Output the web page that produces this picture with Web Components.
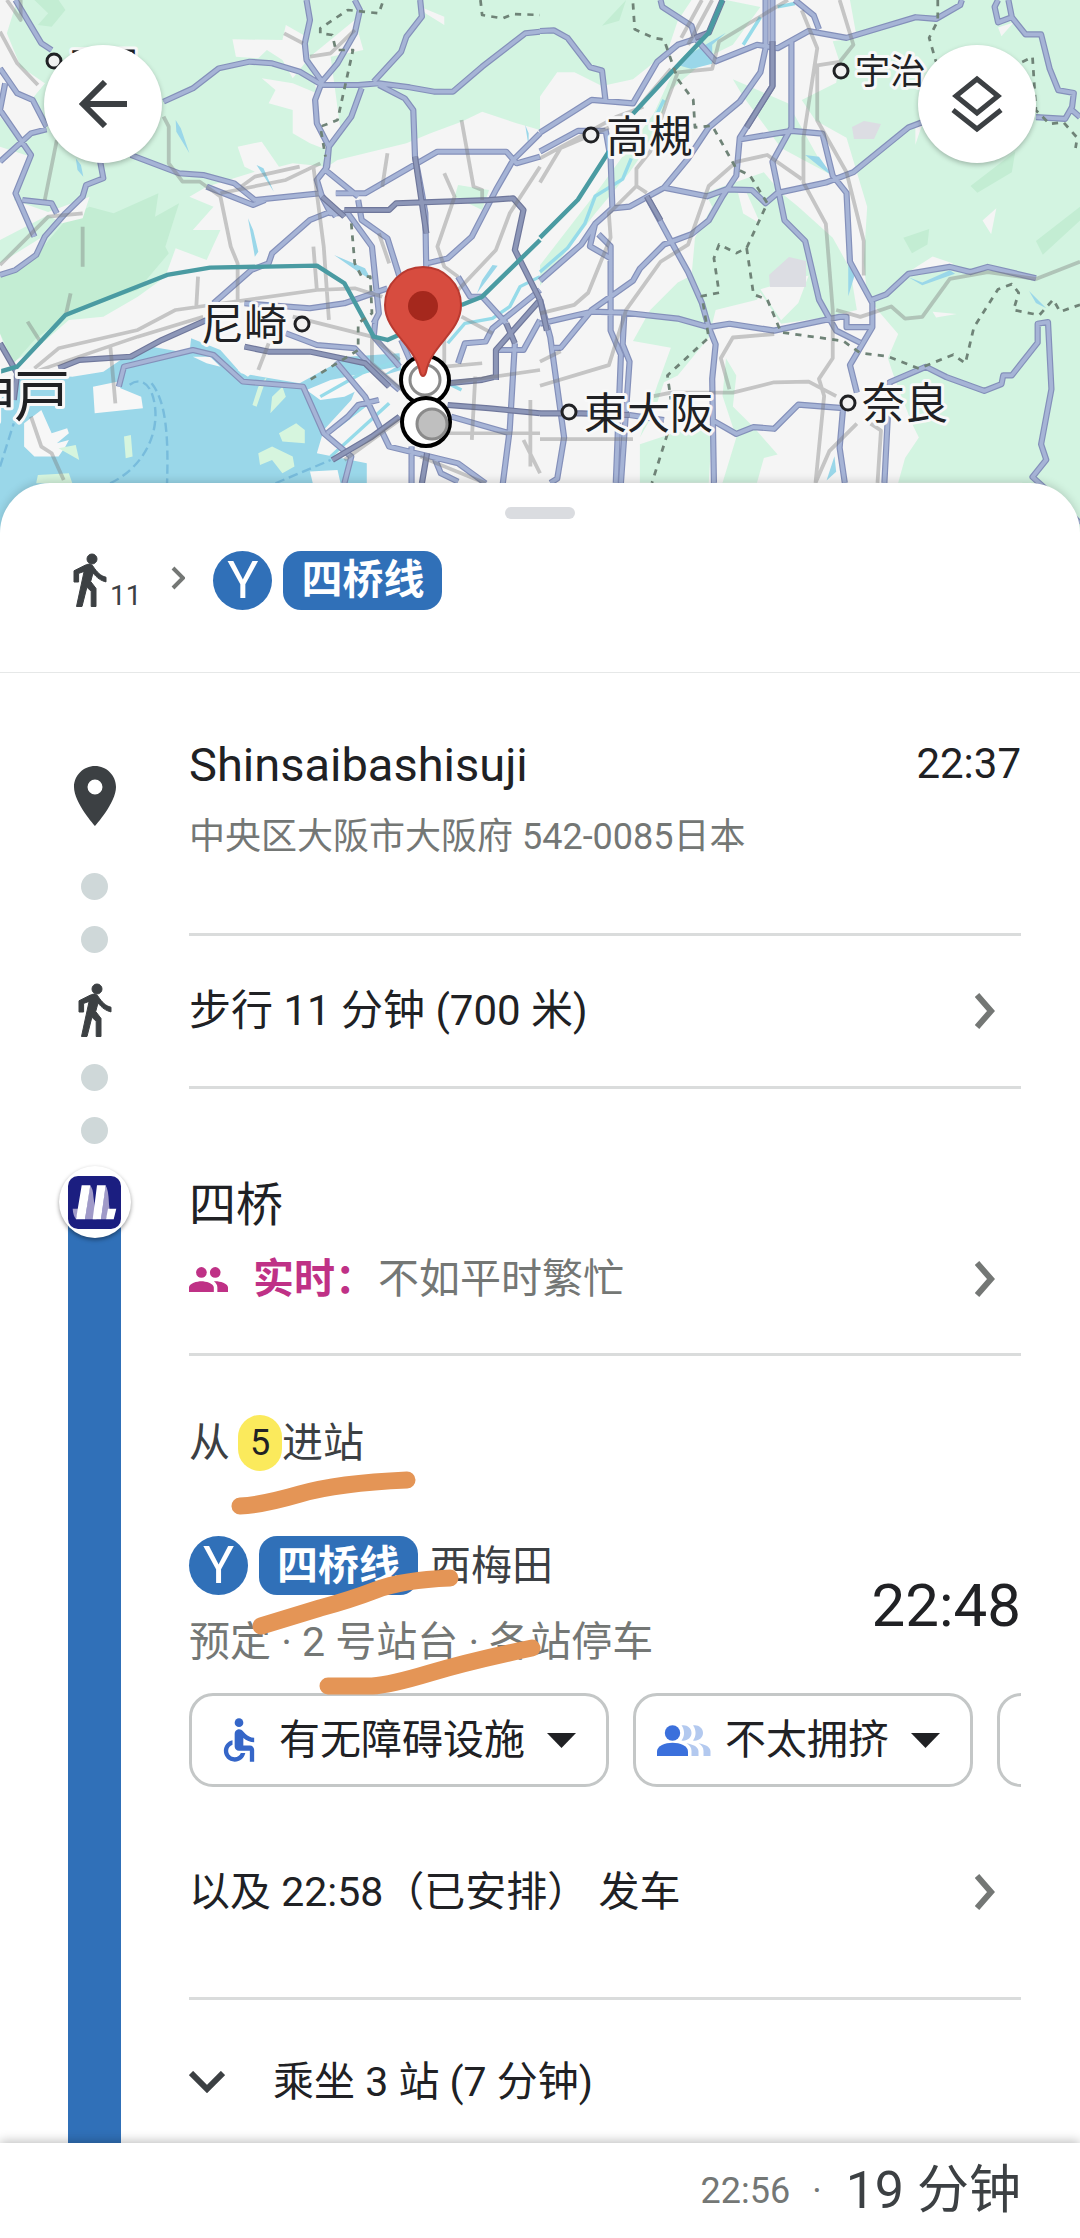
<!DOCTYPE html>
<html lang="zh-CN">
<head>
<meta charset="utf-8">
<meta name="viewport" content="width=device-width, initial-scale=1">
<title>路线详情</title>
<style>
  body {
    margin: 0;
    background: #fff;
    color: #202124;
    font-family: Roboto, "Noto Sans CJK SC", sans-serif;
    font-size: 41px;
    line-height: 54px;
    --line: #3070b8;
    --muted: #747775;
    --rule: #dadcdc;
    --gutter: 59px;
  }
</style>
</head>
<body>
<transit-page>
  <route-map slot="map"></route-map>
  <route-summary slot="summary" minutes="11">
    <line-badge code="Y">四桥线</line-badge>
  </route-summary>

  <route-leg mode="walk">
    <route-step>
      <place-row time="22:37">
        Shinsaibashisuji
        <span slot="address">中央区大阪市大阪府 542-0085日本</span>
      </place-row>
    </route-step>
    <route-step>
      <link-row tall>步行 11 分钟 (700 米)</link-row>
    </route-step>
  </route-leg>

  <route-leg mode="train">
    <route-step>
      <station-info name="四桥">
        <link-row><live-crowd label="实时：">不如平时繁忙</live-crowd></link-row>
      </station-info>
    </route-step>
    <route-step>
      <board-info exit="5" time="22:48">
        <line-badge slot="line" code="Y">四桥线</line-badge>
        <span slot="headsign">西梅田</span>
        <span slot="detail">预定 · 2 号站台 · 各站停车</span>
        <option-chip slot="chips" icon="accessible">有无障碍设施</option-chip>
        <option-chip slot="chips" icon="crowd">不太拥挤</option-chip>
        <option-chip slot="chips" label="更多"></option-chip>
        <link-row slot="next">以及 22:58（已安排） 发车</link-row>
      </board-info>
    </route-step>
    <route-step last>
      <stop-toggle>乘坐 3 站 (7 分钟)</stop-toggle>
    </route-step>
  </route-leg>

  <trip-total slot="footer" arrive="22:56">19 分钟</trip-total>
</transit-page>

<script>
const define = (name, render) => customElements.define(name, class extends HTMLElement {
  constructor() { super(); this.attachShadow({ mode: "open" }); }
  connectedCallback() { this.shadowRoot.innerHTML = render(this); }
});
const attr = (el, name) => el.getAttribute(name) || "";

const reset = `
  *, :host { box-sizing: border-box; }
  button { font: inherit; color: inherit; background: none; border: 0; margin: 0; padding: 0; text-align: left; cursor: pointer; }
  svg { display: block; flex: none; }
`;

const icons = {
  walk: `<svg width="40" height="56" viewBox="0 0 40 56" fill="#3c4043" stroke="#3c4043"><circle cx="22" cy="7" r="5"/><path d="M15 13.300L4 18.800V30h4.600v-8.600l5.500-2L6.500 54.500H12l4.900-19.300 4.300 4.100v15.200h4.800V36.400L20.700 29.500 23 21C27 26 31 28.700 36 29.900V25.200C30.500 24 27 20 23.500 15 21.500 11.500 19 11.500 15 13.300Z"/></svg>`,
  place: `<svg width="72" height="72" viewBox="0 0 24 24" fill="#3c4043"><path d="M12 2C8.130 2 5 5.130 5 9c0 5.250 7 13 7 13s7-7.750 7-13c0-3.870-3.130-7-7-7zm0 9.500a2.500 2.500 0 1 1 0-5 2.500 2.500 0 0 1 0 5z"/></svg>`,
  next: `<svg width="20" height="36" viewBox="0 0 20 36" fill="none" stroke="#747775" stroke-width="6"><path d="M2 2l14 16L2 34"/></svg>`,
  nextSmall: `<svg width="14" height="24" viewBox="0 0 14 24" fill="none" stroke="#747775" stroke-width="4"><path d="M2 2l10 10L2 22"/></svg>`,
  down: `<svg width="36" height="22" viewBox="0 0 36 22" fill="none" stroke="#3c4043" stroke-width="6"><path d="M2 2l16 16L34 2"/></svg>`,
  caret: `<svg width="29" height="15" viewBox="0 0 29 15"><path d="M0 0h29L14.500 15z" fill="#202124"/></svg>`,
  people: `<svg width="39" height="25" viewBox="1 5 22 14" fill="#bf3186"><circle cx="8" cy="8" r="3"/><circle cx="15.800" cy="8" r="3"/><path d="M8 13c-2.330 0-7 1.170-7 3.500V19h14v-2.500c0-2.330-4.670-3.500-7-3.500zm8 0c-.29 0-.62.02-.97.05 1.160.84 1.970 1.970 1.970 3.450V19h6v-2.500c0-2.330-4.670-3.500-7-3.500z"/></svg>`,
  accessible: `<svg width="52" height="52" viewBox="0 0 24 24" fill="#3566c8"><circle cx="12" cy="4" r="2"/><path d="M19 13v-2c-1.540.02-3.090-.75-4.070-1.830l-1.290-1.430c-.17-.19-.38-.34-.61-.45H13c-.35-.2-.75-.3-1.190-.26C10.760 7.110 10 8.040 10 9.090V15c0 1.100.9 2 2 2h5v5h2v-5.500c0-1.100-.9-2-2-2h-3v-3.450c1.290 1.070 3.250 1.940 5 1.950zm-6.170 5c-.41 1.160-1.520 2-2.830 2-1.660 0-3-1.340-3-3 0-1.310.84-2.410 2-2.830V12.100c-2.280.46-4 2.480-4 4.900 0 2.760 2.240 5 5 5 2.420 0 4.440-1.720 4.900-4h-2.070z"/></svg>`,
  crowd: `<svg width="54" height="31" viewBox="0 0 54 31"><circle cx="15.500" cy="8" r="7.700" fill="#3b70dc"/><path d="M0 31v-4.500c0-6 8-8.800 15.500-8.800S31 20.500 31 26.500V31z" fill="#3b70dc"/><g fill="#b3c9ef"><path d="M24.500.6c5-1.200 10 2.400 10 7.400s-5 8.600-10 7.400c3.400-4 3.400-10.800 0-14.800z"/><path d="M36 .6c5-1.200 10 2.400 10 7.400s-5 8.600-10 7.400c3.400-4 3.400-10.800 0-14.800z"/><path d="M29.500 18.300C36.500 19.500 41.500 22 41.500 26.500V31H34.500v-5c0-3.500-2-6-5-7.700z"/><path d="M41.500 18.300C48.500 19.500 53.500 22 53.500 26.500V31H46.500v-5c0-3.500-2-6-5-7.700z"/></g></svg>`,
  back: `<svg width="48" height="48" viewBox="0 0 48 48" fill="none" stroke="#3c4043" stroke-width="6"><path d="M48 24H4M26 2L4 24l22 22"/></svg>`,
  layers: `<svg width="52" height="58" viewBox="0 0 52 58" fill="none" stroke="#3c4043" stroke-width="5"><path d="M26 4l21 17-21 17L5 21zM2 35l24 19 24-19"/></svg>`,
  metro: `<svg width="53" height="53" viewBox="0 0 53 53"><rect width="53" height="53" rx="10" fill="#1b1e80"/><path d="M4.700 32.700h6L8 43.300q-3-4-3.300-10.600zM22 9.300q3 3 3.500 12l3 22H17zM37.500 9.300q3 4 3.500 19l.5 4.500L38 43.300h-5z" fill="#a09ac8"/><path d="M13.700 9.300h8.600L17 43.300H8zM29 9.300h8.700L33 43.300h-8.300zM40 32.700h8.300l-2.600 10.600H38z" fill="#fff"/></svg>`
};

/* Map artwork. Two tiles side by side, each with its own drawing grid. */
const west = {
  park: "M50 0H1568V390L1500 370 1400 335 1340 365 1250 400 1180 430 980 480 950 500 850 490 810 500 760 425 690 440 710 500 740 515 600 560 550 590 620 620 560 690 640 690 600 780 510 745 480 830 400 890 300 950 200 960 100 1050 30 1090 0 1000V840L100 770 140 700 0 790V720L150 640 40 600 90 470 0 440V350L60 420 130 380 90 300 130 250 60 200 20 100ZM1330 555L1420 570 1400 630 1320 590Z",
  forest: "M0 830L100 770 200 650 260 620 330 640 460 580 450 650 520 610 480 740 490 760 400 870 200 940 100 1020 40 1090 0 1000ZM100 0H170L190 30 150 80 110 75 140 40Z",
  town: "M675 118L820 120 830 75 890 110 900 170 850 235 820 180 775 150 750 175 685 170ZM900 170L1030 60 1055 150 960 170 990 400 950 450 900 430 850 400 850 330 780 310 800 270 760 235 850 250 920 280ZM1220 20L1290 50V75L1235 40ZM0 250L60 420 130 380 90 300 130 250ZM130 640L260 590 240 655 180 670Z",
  water: "M0 1200L60 1120 210 1130 300 1115 350 1080 440 1040 550 1060 555 1015 640 1050 700 1120 870 1150 1010 1070 1160 1060 1165 1110 1040 1150 1020 1200 940 1290 920 1360 1065 1390V1660H0ZM510 360L525 385 550 460 512 395ZM745 495L765 505 795 575 770 535ZM720 655L735 690 750 755 740 770ZM220 475L235 495 242 530 225 510ZM970 765L1060 805 1078 840 1040 815ZM1525 375L1535 400V440ZM1430 795L1445 797 1385 880 1400 840Z",
  pier: "M270 1160L340 1145 350 1165 410 1190 415 1225 275 1240ZM70 1270L120 1230 150 1300 195 1285 200 1300 165 1330 200 1320 190 1340 170 1370 100 1370 70 1340ZM890 1170L960 1140 1150 1100 1060 1160 1000 1190 930 1200ZM900 1415L980 1410 1000 1500H920ZM690 1110H740L720 1130ZM560 1070L610 1070 640 1100 600 1090Z",
  isle: "M810 1300L860 1270 885 1290V1330L820 1325ZM360 1310L380 1305 385 1370 365 1375ZM750 1360L790 1340 850 1370 855 1400 820 1420 790 1380 755 1395ZM110 1425L200 1420 210 1450H105ZM170 1345L220 1335 230 1380ZM750 1160L775 1130 745 1220 733 1215ZM790 1190L820 1160 830 1190 785 1240Z",
  river: "M1300 1030L1350 970 1430 955 1480 920 1510 860 1568 830M930 1190L1050 1120 1160 1080M980 1280L1080 1200M960 1370L1130 1210M1300 1150L1340 1170",
  grey: "M0 95L50 190 110 255M165 420L130 600M0 795L140 650 240 640M240 680V800M205 880L190 950M80 965L120 1030M575 830L570 920M475 350L490 380V490L530 545H580L640 590 670 740 690 790V900M640 580L830 540 930 490M700 560L740 530 870 500M910 500L940 740 955 960M910 740L920 870M100 1105L170 1045 400 990 510 930 920 870 1030 865 1110 890M60 1130L400 1010 590 950M850 950L1080 1010 1160 1080M1125 460L1110 560M1100 700L1130 790M1340 360L1375 560 1400 570V600M1290 520L1320 590 1270 740 1290 800 1330 830M1568 500L1480 640 1440 750 1330 870M1300 1150L1568 1110M1300 1300H1568M1380 1130L1370 1320M1340 950L1430 1000M1290 980V1100L1400 1090M320 1035L335 1210M90 1250L120 1340 150 1360 185 1440M825 100L880 130M900 170L960 160 1030 90M780 1030L750 1110M1220 1370L1410 1450M1520 1320L1568 1420M1080 1010V1090L1200 1200M1000 1380L1160 1260M20 0L60 60 60 0M1540 1200V1400",
  road: "M475 305L560 265 635 205 725 185 790 190 870 215 935 255H1040L1100 250 1190 262 1260 275H1315L1400 200 1525 100 1568 95M890 0L900 60 885 130 890 180 935 245 915 300 920 370 955 440 945 510 1040 590M1030 0L1045 30 1030 100 980 190 935 245M1220 0L1225 50 1180 110 1165 155 1085 245M1050 265L1020 350 955 440 950 500 920 540 935 590 960 640H1010L1080 740 1100 940 1085 970M1100 255L1175 295 1200 330 1205 470 1225 580 1235 640 1238 830M45 0L120 130 150 150M0 205L50 280 95 300 135 380M15 250L0 330 90 465 45 580 100 710M0 485L90 400 135 388M0 825L45 810 105 765 130 710 190 640 240 590 250 555 300 535 290 480M65 600L150 610 165 640M380 465L520 520 590 525 680 550 740 600 930 580 975 650M600 560L735 615 770 600M620 910L730 810 780 790 790 760 900 660 960 635M975 580H1060L1270 455H1470L1500 490 1568 470M1568 400L1490 480 1440 570 1370 710 1300 775 1240 790M1040 600L1050 660 1125 715 1160 830M710 910L900 925 1000 910 1125 865M345 1160L360 1100 560 1050 620 1065 705 1145 880 1160 940 1300 1020 1370 1000 1450M830 1000L920 1035 1030 1045 1080 1100 1160 1170M975 1085L1060 1190 1130 1340 1250 1370 1330 1390 1410 1450M950 1300L1010 1250 1040 1215 1100 1200M1310 1250L1480 1300M1330 1090L1350 1030 1410 1025 1430 985 1568 870M1495 1030L1480 1290 1460 1450M1440 1050H1520L1568 960M1330 830L1365 890H1400L1470 970M1195 1340V1450M1165 1020L1190 1080M1090 960L1085 1010 1160 1100M1260 1370L1280 1420 1330 1445",
  trunk: "M1000 630H1130L1150 610 1420 600 1490 595 1520 630 1495 750 1568 900M170 1105L230 1080 380 1070 470 1020 600 960M710 1040L780 1055 900 1055 1060 1090 1130 1160M1300 1215L1420 1225 1568 1240M1470 970L1495 1030M1440 1140V1050L1568 900M1240 1360L1225 1450M0 1030L50 1120 40 1200M965 1380L1080 1310 1160 1250M1205 470L1238 700M1300 1150L1400 1140 1440 1130M935 590L1000 650",
  rail: "M0 1115L50 1100 190 945 485 825 610 803 920 797 1000 850 1085 1010 1125 1020 1190 990M1340 915L1400 890 1568 720",
  ferry: "M440 1150C480 1200 490 1300 485 1450M320 1450C420 1400 460 1300 450 1220S400 1130 370 1160M0 1400L40 1270M800 1450L960 1380",
  border: "M1110 10L1100 40 1010 30 930 85V100L965 105 975 150H1025L980 360 930 380 945 470M1020 670L1030 790 1050 830H1075L1080 940 1040 970V1050L900 1140M1395 0L1400 45 1460 55 1490 42 1568 45"
};
const east = {
  park: "M0 0H440L400 60 380 120 370 150 270 230 180 250 100 210 50 210 0 280ZM900 0H1568V1640H1500L1400 1402H1040L1060 1330 1100 1270 1080 1230 1030 1100 1010 1040 1040 970 980 900 950 860 940 760 950 600 890 400 800 350 760 290 860 240 870 180 850 120 920 110ZM480 560L650 500 700 560 750 600 850 690 900 780 920 900 840 920 700 940 640 850 630 870 510 900 490 980 400 1090 360 1110 330 1200 290 1270 340 1120 380 1010 270 990 320 900 400 820 440 800 450 690 500 600ZM560 230L720 300 820 480 850 510 700 430 590 280ZM290 1290L380 1260 500 1230 490 1402H290ZM540 1040L570 1090 560 1180 620 1240 690 1320 650 1330 630 1402H530L570 1270 530 1150ZM540 0L640 20 560 130 500 160 380 260 330 400 260 500 160 620 0 830V770L170 550 330 330 400 180 500 80Z",
  forest: "M1250 540L1380 440 1370 500 1270 560ZM1055 690L1130 665 1125 710 1080 735ZM1440 700L1568 600V640L1460 740ZM180 75L250 0 230 60Z",
  town: "M1285 640L1325 605 1310 680ZM1140 905L1210 912 1150 922ZM1330 80L1375 65 1340 105ZM1070 790L1140 745 1200 765 1100 800ZM640 840L780 800 750 880 700 930ZM575 560L600 560 640 650 590 620ZM1090 370L1110 360 1090 420Z",
  water: "M405 190L430 160 540 95 500 130V185L440 200ZM770 450L810 455 850 512 820 490ZM895 765L915 795 895 860ZM1070 805L1110 820 1190 785 1205 795 1110 828ZM1420 845L1470 895 1440 880ZM855 1325L860 1370 832 1395Z",
  pier: "", isle: "",
  river: "M360 290L340 330M265 460L240 520 160 570 130 650 80 720 0 790M640 50L590 130M690 20L740 10",
  grey: "M430 130L500 0M410 110L470 0M760 30L805 140 765 400V530L830 650 850 900V1040L810 1100 825 1150 800 1402M870 0L910 130 870 180 805 190V350L890 500 940 700V800M720 0L520 120 500 200 400 210 370 290 320 440 280 490V540M0 910L100 885 140 850 205 690 200 620 280 540 310 560M0 1120L200 1060 250 900 350 760 430 710 490 540 570 470 660 450 760 520M680 970L560 980 525 1040 550 1130M330 1150L380 1140H560L680 1110 780 1108 860 1150M860 900L930 920 1020 890 1060 925 1110 920 1190 810 1300 790 1440 810 1568 760M0 1275H270M0 530L60 430 200 370M920 1230L840 1310 800 1402M960 1230L990 1250 980 1402M0 460L220 340 300 310M0 1050L60 1020M380 200L270 330",
  road: "M0 90L40 88 80 110 145 195 180 205 190 290M0 385L150 290 270 300 340 180 400 130 460 110M0 440L110 380H190M350 0L355 20 440 75 450 110 510 178 630 130 690 140 780 90 890 110 1090 50 1150 55 1220 15 1225 0M740 0L795 45 810 85M655 0V140L640 210 580 295 490 370 430 460 360 545 260 600 210 605 160 650 120 710 0 815M675 0V250L580 400 570 510 530 570 490 640 440 680 360 710 290 780 270 815 150 900 60 1010H40M730 120V370L675 470 710 640 770 700 810 870 860 960 930 995M580 405L730 380 820 388 850 510 890 560 900 760 965 880V950L900 1060 920 1140M360 545L485 570 540 550 615 552 655 590 690 560 830 530 910 500 1070 370 1110 355M190 375L205 460 210 600M310 570L380 700 430 790 470 880 490 950 510 1000 500 1100 505 1402M160 650L145 715 205 750M170 680L205 715V960L235 1030 220 1402M0 940L150 905 245 908 400 925 490 950 550 940 680 960 870 920H890V950H965M245 910L240 1000 260 1050 235 1402M0 870L30 980 70 1270 50 1390 30 1402M260 1205L360 1220M500 1220L570 1260 620 1240 680 1245 750 1175 880 1185 870 1300 885 1402M965 870L1005 855 1070 795 1190 775 1250 790 1300 775 1440 808M1000 1402L1015 1110 1120 1065 1180 1095 1290 1135 1340 1115 1345 1090H1370L1445 995V940L1475 935 1485 1130 1455 1290 1470 1335 1430 1385 1480 1430 1568 1520M1330 0L1320 20 1330 65 1370 50 1410 100H1455L1480 200 1505 262 1550 270 1545 310 1525 345 1440 340M1360 0L1370 50M1545 320L1568 340",
  trunk: "M0 1200H120L260 1205M530 0L490 95 450 110M675 120V250L600 370M0 870L20 960M310 570L350 640",
  rail: "M530 0L490 95 400 190 270 330M200 440L110 580 0 690",
  ferry: "",
  border: "M270 10L275 85 330 110 360 115 400 230 445 290 450 370 500 365 570 490 610 510 660 590 600 720 570 735 520 710 505 750 520 850 470 860 490 980 370 1090 380 1160M600 720L620 855 660 870 700 965 880 990 930 1025 1010 1035 1100 1070 1200 1030 1235 1055 1260 950 1330 840 1370 825 1390 850 1375 900 1450 915 1490 870 1510 905 1568 885M370 1260L325 1402M1155 0V60L1130 110 1150 180M1400 180L1430 165 1440 320 1480 360 1520 355 1560 400 1555 430"
};
const tile = (t, transform) => `<g transform="${transform}">
  ${["park", "forest", "town", "water", "pier", "isle"].map(k => `<path class="${k}" d="${t[k]}"/>`).join("")}
  <g class="lines">${["river", "ferry", "casing", "road", "trunk-casing", "trunk", "grey", "rail", "border"].map(k =>
    `<path class="${k}" d="${t[k] || t[k.replace("-casing", "").replace("casing", "road")]}"/>`).join("")}</g>
</g>`;
const label = (x, y, size, text, cx, cy) =>
  `<text x="${x}" y="${y}" font-size="${size}">${text}</text>${cx ? `<circle class="town-dot" cx="${cx}" cy="${cy}" r="7"/>` : ""}`;

define("route-map", () => `
  <style>${reset}
    :host { display: block; position: relative; height: 540px; overflow: hidden; background: #f5f5f5; }
    .art { width: 100%; height: 100%; }
    .park { fill: #d3f4e1; } .forest { fill: #c3edd3; } .town { fill: #f5f5f5; }
    .water { fill: #9ad7e9; } .pier { fill: #f7f7f7; } .isle { fill: #d6f5de; }
    .lines { fill: none; stroke-linejoin: round; }
    .river { stroke: #96dbe9; stroke-width: 10; }
    .ferry { stroke: #78bcdc; stroke-width: 7; stroke-dasharray: 28 14; }
    .grey { stroke: #777; stroke-opacity: .38; stroke-width: 11; }
    .casing { stroke: #8490ba; stroke-width: 18; } .road { stroke: #a6b4d6; stroke-width: 11; }
    .trunk-casing { stroke: #6f779b; stroke-width: 18; } .trunk { stroke: #8d97b8; stroke-width: 11; }
    .rail { stroke: #4a9ba2; stroke-width: 13; }
    .border { stroke: #6f8377; stroke-width: 8; stroke-dasharray: 18 18; }
    text { font-family: "Noto Sans CJK JP", sans-serif; fill: #202124; stroke: #f8f8f8; stroke-width: 6; stroke-linejoin: round; paint-order: stroke; }
    .town-dot { fill: #f1f1f1; stroke: #202124; stroke-width: 3; }
    nav { position: absolute; inset: 45px 44px auto; display: flex; justify-content: space-between; }
    button { width: 118px; height: 118px; border-radius: 50%; background: #fff; display: grid; place-items: center; box-shadow: 0 2px 5px rgba(0,0,0,.25); }
  </style>
  <svg class="art" lang="ja" viewBox="0 0 1080 540" preserveAspectRatio="xMidYMin slice" role="img" aria-label="大阪地图">
    ${tile(west, "scale(.3444 .3333)")}
    ${tile(east, "translate(540) scale(.3444)")}
    <path d="M852 127l12-6 17 3-7 15h-20zM769 275l20-18 17 4v26h-36z" fill="#dcdde3"/>
    ${label(68, 77, 35, "三田", 54, 61)}
    ${label(606, 152, 43, "高槻", 591, 135)}
    ${label(855, 84, 35, "宇治", 841, 71)}
    ${label(201, 340, 43, "尼崎", 302, 324)}
    ${label(-42, 416, 56, "神戸")}
    ${label(584, 429, 43, "東大阪", 569, 412)}
    ${label(862, 419, 43, "奈良", 848, 403)}
    <g stroke="#000" stroke-width="4" fill="#fff">
      <circle cx="425" cy="380" r="24"/><circle cx="425" cy="380" r="15" stroke="#8b8b8b" stroke-width="3"/>
      <circle cx="426" cy="422" r="24"/><circle cx="432" cy="424" r="15" fill="#bfbfbf" stroke="#8b8b8b" stroke-width="3"/>
    </g>
    <path d="M423 267c21 0 38 17 38 38 0 27-30 40-35 67q-1 4-3 4t-3-4c-5-27-35-40-35-67 0-21 17-38 38-38z" fill="#d74c3f" stroke="#b93a30" stroke-width="2"/>
    <circle cx="423" cy="306" r="15" fill="#a5281d"/>
  </svg>
  <nav>
    <button aria-label="返回">${icons.back}</button>
    <button aria-label="图层">${icons.layers}</button>
  </nav>`);

define("transit-page", () => `
  <style>${reset}
    :host { display: flex; flex-direction: column; min-height: 100vh; }
    main { position: relative; flex: 1; margin-top: -57px; background: #fff; border-radius: 50px 50px 0 0; box-shadow: 0 -2px 8px rgba(0,0,0,.15); }
    .handle { display: block; width: 70px; height: 12px; margin: 0 auto; border-radius: 6px; background: #dadce0; }
    header { padding-top: 24px; border-bottom: 1px solid #e6e8e8; }
    footer { position: sticky; bottom: 0; z-index: 1; }
  </style>
  <slot name="map"></slot>
  <main>
    <header><button class="handle" aria-label="展开"></button><slot name="summary"></slot></header>
    <slot></slot>
  </main>
  <footer><slot name="footer"></slot></footer>`);

define("route-summary", el => `
  <style>${reset}
    :host { display: flex; align-items: center; padding: 31px 59px 62px 70px; height: 153px; }
    .walk { display: flex; align-items: flex-end; font-size: 28px; line-height: 24px; color: #3c4043; }
    .sep { margin: 0 28px 0 30px; padding-bottom: 4px; }
  </style>
  <span class="walk">${icons.walk}${attr(el, "minutes")}</span>
  <span class="sep">${icons.nextSmall}</span>
  <slot></slot>`);

define("line-badge", el => `
  <style>${reset}
    :host { display: inline-flex; gap: 11px; color: #fff; }
    span { height: 59px; background: var(--line); display: grid; place-items: center; }
    .code { width: 59px; border-radius: 50%; font-size: 52px; line-height: 60px; }
    .name { padding: 0 18px; border-radius: 18px; line-height: 54px; font-weight: 700; }
  </style>
  <span class="code">${attr(el, "code")}</span><span class="name"><slot></slot></span>`);

define("route-leg", el => `
  <style>${reset}
    :host { display: grid; grid-template-columns: 189px minmax(0, 1fr); }
    .rail { display: flex; flex-direction: column; align-items: center; }
    .walk { padding-top: 87px; }
    .dots { display: grid; gap: 26px; margin: 26px 0 29px; }
    .place + .dots { margin-top: 41px; }
    .dots:last-child { margin-bottom: 0; }
    .dots i { width: 27px; height: 27px; border-radius: 50%; background: #cfd8d9; }
    .train { padding-top: 22px; }
    .agency { display: grid; place-items: center; width: 72px; height: 72px; border-radius: 50%; background: #fff; box-shadow: 0 2px 4px rgba(0,0,0,.4); z-index: 1; }
    .bar { flex: 1; width: 53px; margin-top: -20px; background: var(--line); }
  </style>
  ${attr(el, "mode") === "walk"
    ? `<div class="rail walk"><span class="place">${icons.place}</span><div class="dots"><i></i><i></i></div>${icons.walk}<div class="dots"><i></i><i></i></div></div>`
    : `<div class="rail train"><span class="agency">${icons.metro}</span><div class="bar"></div></div>`}
  <div><slot></slot></div>`);

define("route-step", () => `
  <style>${reset}
    :host { display: block; margin-right: var(--gutter); border-bottom: 3px solid var(--rule); }
    :host([last]) { border: 0; }
  </style>
  <slot></slot>`);

define("place-row", el => `
  <style>${reset}
    :host { display: grid; grid-template-columns: 1fr auto; padding: 62px 0 69px; row-gap: 15px; }
    .name { font-size: 47px; line-height: 60px; }
    .address { font-size: 36px; color: var(--muted); grid-column: 1 / -1; }
    time { font-size: 42px; line-height: 58px; }
  </style>
  <div class="name"><slot></slot></div>
  <time>${attr(el, "time")}</time>
  <div class="address"><slot name="address"></slot></div>`);

define("link-row", () => `
  <style>${reset}
    :host { display: block; }
    button { display: flex; width: 100%; align-items: center; justify-content: space-between; padding-right: 26px; }
    :host([tall]) button { height: 150px; font-size: 42px; }
  </style>
  <button><span><slot></slot></span>${icons.next}</button>`);

define("station-info", el => `
  <style>${reset}
    :host { display: grid; gap: 17px; padding: 31px 0 47px; }
    .name { font-size: 47px; line-height: 60px; }
  </style>
  <div class="name">${attr(el, "name")}</div>
  <slot></slot>`);

define("live-crowd", el => `
  <style>${reset}
    :host { display: flex; align-items: center; color: var(--muted); }
    b { margin: 0 2px 0 25px; color: #bf3186; }
  </style>
  ${icons.people}<b>${attr(el, "label")}</b><slot></slot>`);

define("board-info", el => `
  <style>${reset}
    :host { display: block; position: relative; padding: 59px 0 78px; color: #202124; }
    .exit { display: flex; align-items: center; color: #3c4043; }
    .exit b { margin-left: 8px; width: 44px; line-height: 56px; border-radius: 22px; background: #fbea5c; color: #202124; font-size: 36px; font-weight: 400; text-align: center; }
    .train { display: grid; grid-template-columns: 1fr auto; align-items: center; margin-top: 65px; }
    .line { display: flex; align-items: center; gap: 12px; color: #3c4043; }
    .detail { margin-top: 20px; color: var(--muted); white-space: nowrap; }
    time { font-size: 60px; line-height: 72px; padding-top: 6px; }
    .chips { display: flex; gap: 24px; margin: 24px 0 78px; overflow: hidden; }
    .marks { position: absolute; left: 0; top: 0; pointer-events: none; }
  </style>
  <div class="exit">从<b>${attr(el, "exit")}</b>进站</div>
  <div class="train">
    <div>
      <div class="line"><slot name="line"></slot><slot name="headsign"></slot></div>
      <div class="detail"><slot name="detail"></slot></div>
    </div>
    <time>${attr(el, "time")}</time>
  </div>
  <div class="chips"><slot name="chips"></slot></div>
  <slot name="next"></slot>
  <svg class="marks" width="400" height="400" viewBox="189 1357 400 400" fill="none" stroke="#e49556" stroke-width="17" stroke-linecap="round" stroke-linejoin="round">
    <path d="M240 1507Q262 1506 300 1495T407 1481"/>
    <path d="M261 1627L320 1609Q350 1601 376 1591T450 1579"/>
    <path d="M328 1687H372Q390 1686 430 1674T532 1649"/>
  </svg>`);

define("option-chip", el => `
  <style>${reset}
    :host { flex: none; }
    button { display: flex; align-items: center; height: 94px; min-width: 200px; padding: 0 30px 0 21px; border: 3px solid #c4c7c7; border-radius: 24px; white-space: nowrap; }
    span { margin: 0 22px 0 14px; }
  </style>
  <button aria-haspopup="menu" ${attr(el, "label") ? `aria-label="${attr(el, "label")}"` : ""}>
    ${attr(el, "icon") ? `${icons[attr(el, "icon")]}<span><slot></slot></span>${icons.caret}` : ""}
  </button>`);

define("stop-toggle", () => `
  <style>${reset}
    :host { display: block; padding: 55px 0 34px; }
    button { display: flex; align-items: center; gap: 48px; }
  </style>
  <button aria-expanded="false">${icons.down}<span><slot></slot></span></button>`);

define("trip-total", el => `
  <style>${reset}
    :host { display: flex; align-items: center; justify-content: flex-end; height: 95px; padding-right: var(--gutter); background: #fff; color: #3c4043; font-size: 52px; box-shadow: 0 -2px 10px rgba(0,0,0,.25); }
    small { font-size: 36px; color: var(--muted); white-space: pre; margin-right: 24px; }
    small i { font-style: normal; margin-left: 22px; }
  </style>
  <small>${attr(el, "arrive")}<i>·</i></small><slot></slot>`);
</script>
</body>
</html>
